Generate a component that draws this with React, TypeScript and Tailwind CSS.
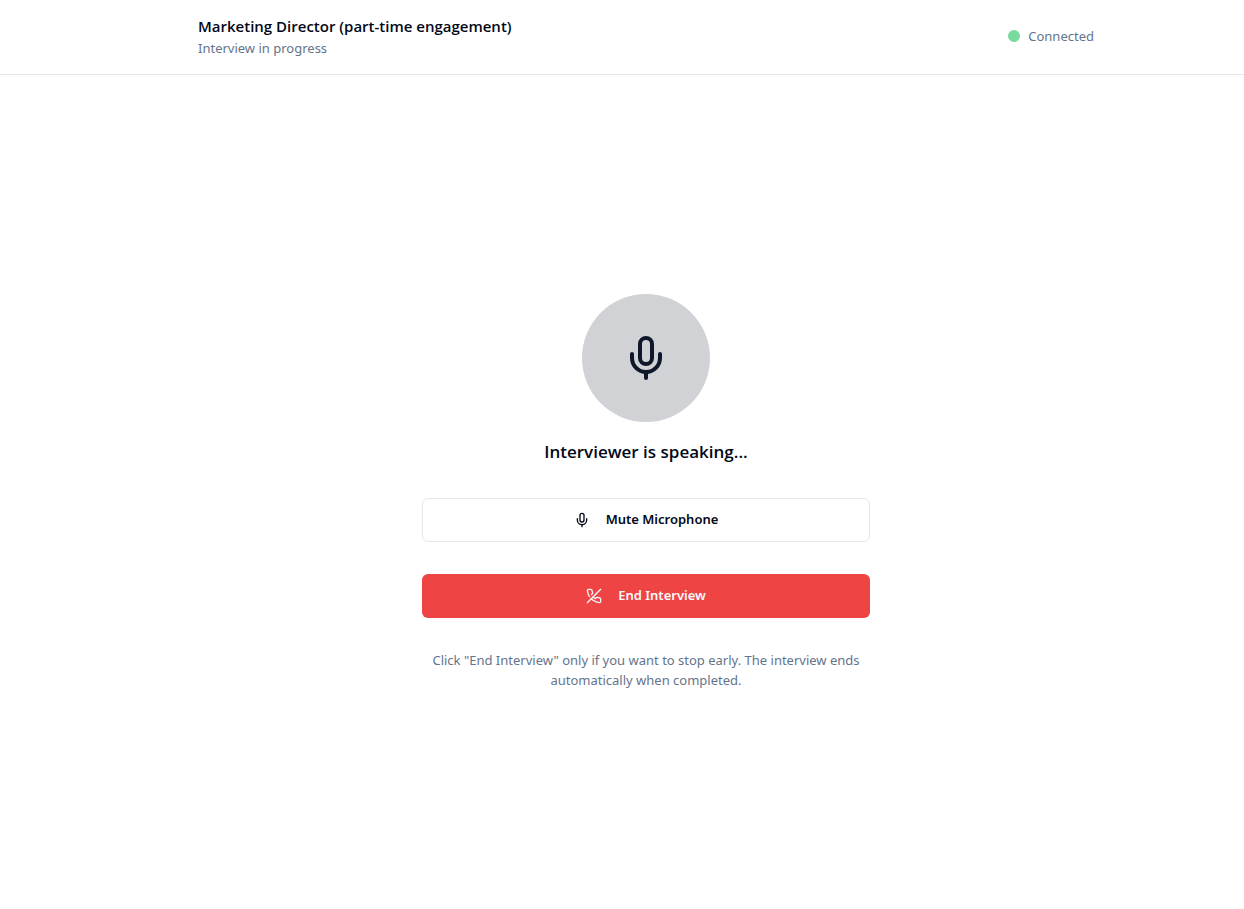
import { Mic } from "lucide-react";

function HangUpIcon({ className }: { className?: string }) {
  return (
    <svg
      viewBox="0 0 24 24"
      fill="none"
      stroke="currentColor"
      strokeWidth="2"
      strokeLinecap="round"
      strokeLinejoin="round"
      aria-hidden="true"
      className={className}
    >
      <path d="M10.68 13.31a16 16 0 0 0 3.41 2.6l1.27-1.27a2 2 0 0 1 2.11-.45 12.84 12.84 0 0 0 2.81.7 2 2 0 0 1 1.72 2v3a2 2 0 0 1-2.18 2 19.79 19.79 0 0 1-8.63-3.07 19.42 19.42 0 0 1-3.33-2.67m-2.67-3.34a19.79 19.79 0 0 1-3.07-8.63A2 2 0 0 1 4.11 2h3a2 2 0 0 1 2 1.72 12.84 12.84 0 0 0 .7 2.81 2 2 0 0 1-.45 2.11L8.09 9.91" />
      <line x1="22" x2="2" y1="2" y2="22" />
    </svg>
  );
}

function Header() {
  return (
    <header className="border-b border-[#e4e5e9] py-4 pl-12">
      <div className="mx-auto flex max-w-4xl items-center justify-between">
        <div className="flex flex-col gap-0.5">
          <h1 className="font-['Open_Sans',sans-serif] text-[15px] leading-5 font-semibold text-[#020817]">
            Marketing Director (part-time engagement)
          </h1>
          <p className="text-[13px] leading-5 text-[#64748b]">
            Interview in progress
          </p>
        </div>
        <div className="flex items-center gap-2 pb-0.5">
          <span className="size-3 rounded-full bg-[#78da9b]" />
          <span className="text-[13px] leading-5 text-[#64748b]">
            Connected
          </span>
        </div>
      </div>
    </header>
  );
}

export default function App() {
  return (
    <div className="flex min-h-screen flex-col bg-white font-['Noto_Sans',sans-serif]">
      <Header />
      <main className="flex flex-1 items-center justify-center pl-12">
        <div className="flex w-full max-w-md flex-col gap-8">
          <div className="flex flex-col items-center gap-4">
            <div className="flex size-32 items-center justify-center rounded-full bg-[#d1d2d6]">
              <Mic className="size-12 text-[#0f172a]" />
            </div>
            <h2 className="font-['Open_Sans',sans-serif] text-[17px] leading-7 font-semibold text-[#020817]">
              Interviewer is speaking...
            </h2>
          </div>
          <button
            type="button"
            className="flex h-11 w-full items-center justify-center gap-4 rounded-md border border-[#e5e8ec] text-[13px] font-semibold text-[#020817]"
          >
            <Mic className="size-4" />
            Mute Microphone
          </button>
          <button
            type="button"
            className="flex h-11 w-full items-center justify-center gap-4 rounded-md bg-[#ef4444] text-[13px] font-semibold text-[#f8fafc]"
          >
            <HangUpIcon className="size-4" />
            End Interview
          </button>
          <p className="text-center text-[13px] leading-5 text-[#64748b]">
            Click "End Interview" only if you want to stop early. The interview
            ends automatically when completed.
          </p>
        </div>
      </main>
    </div>
  );
}
